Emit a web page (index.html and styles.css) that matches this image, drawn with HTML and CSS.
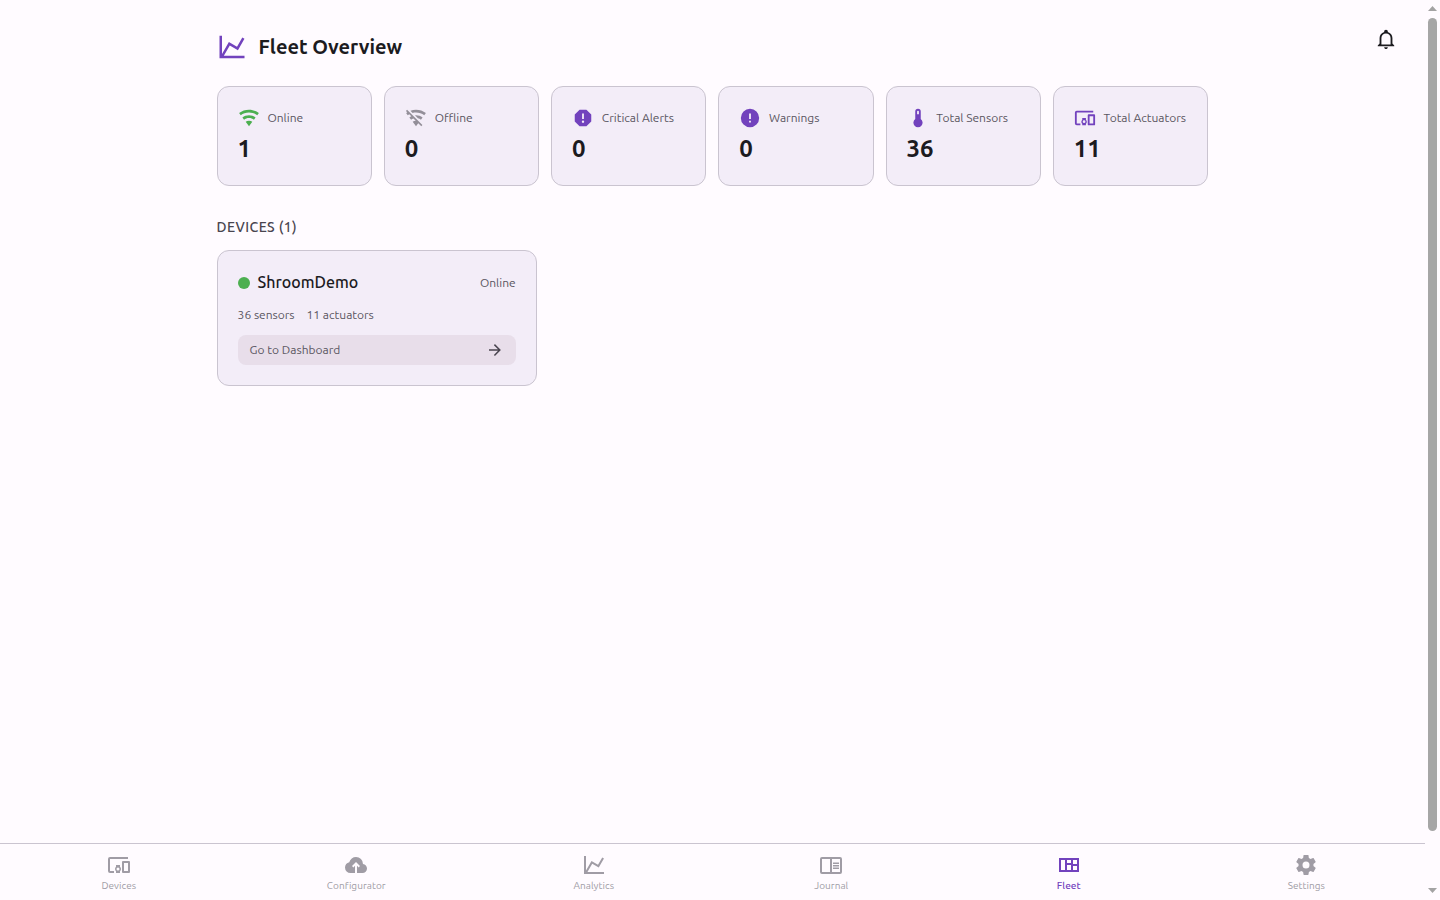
FILE: index.html
```
<!DOCTYPE html>
<html lang="en">
<head>
    <meta charset="UTF-8">
    <meta name="viewport" content="width=device-width, initial-scale=1.0">
    <title>Fleet Overview</title>
    <link rel="stylesheet" href="styles.css">
</head>
<body>
    <svg class="sprite" aria-hidden="true">
        <symbol id="chart" viewBox="0 0 24 24"><path d="M16,11.78L20.24,4.45L21.97,5.45L16.74,14.5L10.23,10.75L5.46,19H22V21H2V3H4V17.54L9.5,8L16,11.78Z"/></symbol>
        <symbol id="wifi" viewBox="0 0 24 24"><path d="M12,21L15.6,16.2C14.6,15.45 13.35,15 12,15C10.65,15 9.4,15.45 8.4,16.2L12,21M12,3C7.95,3 4.21,4.34 1.2,6.6L3,9C5.5,7.12 8.62,6 12,6C15.38,6 18.5,7.12 21,9L22.8,6.6C19.79,4.34 16.05,3 12,3M12,9C9.3,9 6.81,9.89 4.8,11.4L6.6,13.8C8.1,12.67 9.97,12 12,12C14.03,12 15.9,12.67 17.4,13.8L19.2,11.4C17.19,9.89 14.7,9 12,9Z"/></symbol>
        <symbol id="wifi-off" viewBox="0 0 24 24"><path d="M2.28,3L1,4.27L2.47,5.74C2.04,6 1.61,6.29 1.2,6.6L3,9C3.53,8.6 4.08,8.25 4.66,7.93L6.89,10.16C6.15,10.5 5.44,10.91 4.8,11.4L6.6,13.8C7.38,13.22 8.26,12.77 9.2,12.47L11.75,15C10.5,15.07 9.34,15.5 8.4,16.2L12,21L14.46,17.73L17.74,21L19,19.72M12,3C9.85,3 7.8,3.38 5.9,4.07L8.29,6.47C9.5,6.16 10.72,6 12,6C15.38,6 18.5,7.11 21,9L22.8,6.6C19.79,4.34 16.06,3 12,3M12,9C11.62,9 11.25,9 10.88,9.05L14.07,12.25C15.29,12.53 16.43,13.07 17.4,13.8L19.2,11.4C17.2,9.89 14.7,9 12,9Z"/></symbol>
        <symbol id="alert-octagon" viewBox="0 0 24 24"><path d="M13,13H11V7H13M12,17.3A1.3,1.3 0 0,1 10.7,16A1.3,1.3 0 0,1 12,14.7A1.3,1.3 0 0,1 13.3,16A1.3,1.3 0 0,1 12,17.3M15.73,3H8.27L3,8.27V15.73L8.27,21H15.73L21,15.73V8.27L15.73,3Z"/></symbol>
        <symbol id="alert-circle" viewBox="0 0 24 24"><path d="M13,13H11V7H13M13,17H11V15H13M12,2A10,10 0 0,0 2,12A10,10 0 0,0 12,22A10,10 0 0,0 22,12A10,10 0 0,0 12,2Z"/></symbol>
        <symbol id="thermometer" viewBox="0 0 24 24"><path d="M15 13V5A3 3 0 0 0 9 5V13A5 5 0 1 0 15 13M12 4A1 1 0 0 1 13 5V8H11V5A1 1 0 0 1 12 4Z"/></symbol>
        <symbol id="devices" viewBox="0 0 24 24"><path d="M3,6H21V4H3A2,2 0 0,0 1,6V18A2,2 0 0,0 3,20H7V18H3V6M13,12H9V13.78C8.39,14.33 8,15.11 8,16C8,16.89 8.39,17.67 9,18.22V20H13V18.22C13.61,17.67 14,16.88 14,16C14,15.12 13.61,14.33 13,13.78V12M11,17.5A1.5,1.5 0 0,1 9.5,16A1.5,1.5 0 0,1 11,14.5A1.5,1.5 0 0,1 12.5,16A1.5,1.5 0 0,1 11,17.5M22,8H16A1,1 0 0,0 15,9V19A1,1 0 0,0 16,20H22A1,1 0 0,0 23,19V9A1,1 0 0,0 22,8M21,18H17V10H21V18Z"/></symbol>
        <symbol id="arrow" viewBox="0 0 24 24"><path d="M4,11V13H16L10.5,18.5L11.92,19.92L19.84,12L11.92,4.08L10.5,5.5L16,11H4Z"/></symbol>
        <symbol id="bell" viewBox="0 0 24 24"><path d="M10 21H14C14 22.1 13.1 23 12 23S10 22.1 10 21M21 19V20H3V19L5 17V11C5 7.9 7 5.2 10 4.3V4C10 2.9 10.9 2 12 2S14 2.9 14 4V4.3C17 5.2 19 7.9 19 11V17L21 19M17 11C17 8.2 14.8 6 12 6S7 8.2 7 11V18H17V11Z"/></symbol>
        <symbol id="cloud" viewBox="0 0 24 24"><path d="M11 20H6.5Q4.22 20 2.61 18.43 1 16.85 1 14.58 1 12.63 2.17 11.1 3.35 9.57 5.25 9.15 5.88 6.85 7.75 5.43 9.63 4 12 4 14.93 4 16.96 6.04 19 8.07 19 11 20.73 11.2 21.86 12.5 23 13.78 23 15.5 23 17.38 21.69 18.69 20.38 20 18.5 20H13V12.85L14.6 14.4L16 13L12 9L8 13L9.4 14.4L11 12.85Z"/></symbol>
        <symbol id="journal" viewBox="0 0 24 24"><path fill-rule="evenodd" d="M3,4H21A2,2 0 0,1 23,6V19A2,2 0 0,1 21,21H3A2,2 0 0,1 1,19V6A2,2 0 0,1 3,4M3,6V19H11V6H3M13,6V19H21V6H13M14,9.5H20V11H14V9.5M14,12H20V13.5H14V12M14,14.5H20V16H14V14.5Z"/></symbol>
        <symbol id="fleet" viewBox="0 0 24 24"><path fill-rule="evenodd" d="M2,5H22V19H2V5M4,7V17H8V7H4M10,7V10H14V7H10M16,7V11H20V7H16M10,12V17H14V12H10M16,13V17H20V13H16Z"/></symbol>
        <symbol id="cog" viewBox="0 0 24 24"><path d="M12,15.5A3.5,3.5 0 0,1 8.5,12A3.5,3.5 0 0,1 12,8.5A3.5,3.5 0 0,1 15.5,12A3.5,3.5 0 0,1 12,15.5M19.43,12.97C19.47,12.65 19.5,12.33 19.5,12C19.5,11.67 19.47,11.34 19.43,11L21.54,9.37C21.73,9.22 21.78,8.95 21.66,8.73L19.66,5.27C19.54,5.05 19.27,4.96 19.05,5.05L16.56,6.05C16.04,5.66 15.5,5.32 14.87,5.07L14.5,2.42C14.46,2.18 14.25,2 14,2H10C9.75,2 9.54,2.18 9.5,2.42L9.13,5.07C8.5,5.32 7.96,5.66 7.44,6.05L4.95,5.05C4.73,4.96 4.46,5.05 4.34,5.27L2.34,8.73C2.21,8.95 2.27,9.22 2.46,9.37L4.57,11C4.53,11.34 4.5,11.67 4.5,12C4.5,12.33 4.53,12.65 4.57,12.97L2.46,14.63C2.27,14.78 2.21,15.05 2.34,15.27L4.34,18.73C4.46,18.95 4.73,19.03 4.95,18.95L7.44,17.94C7.96,18.34 8.5,18.68 9.13,18.93L9.5,21.58C9.54,21.82 9.75,22 10,22H14C14.25,22 14.46,21.82 14.5,21.58L14.87,18.93C15.5,18.67 16.04,18.34 16.56,17.94L19.05,18.95C19.27,19.03 19.54,18.95 19.66,18.73L21.66,15.27C21.78,15.05 21.73,14.78 21.54,14.63L19.43,12.97Z"/></symbol>
    </svg>

    <div class="app">
        <button class="bell" aria-label="Notifications"><svg><use href="#bell"/></svg></button>
        <main>
            <header>
                <svg><use href="#chart"/></svg>
                <h1>Fleet Overview</h1>
            </header>

            <section class="stats">
                <div class="card stat online">
                    <div class="label"><svg><use href="#wifi"/></svg><span>Online</span></div>
                    <div class="value">1</div>
                </div>
                <div class="card stat offline">
                    <div class="label"><svg><use href="#wifi-off"/></svg><span>Offline</span></div>
                    <div class="value">0</div>
                </div>
                <div class="card stat">
                    <div class="label"><svg><use href="#alert-octagon"/></svg><span>Critical Alerts</span></div>
                    <div class="value">0</div>
                </div>
                <div class="card stat">
                    <div class="label"><svg><use href="#alert-circle"/></svg><span>Warnings</span></div>
                    <div class="value">0</div>
                </div>
                <div class="card stat">
                    <div class="label"><svg><use href="#thermometer"/></svg><span>Total Sensors</span></div>
                    <div class="value">36</div>
                </div>
                <div class="card stat">
                    <div class="label"><svg><use href="#devices"/></svg><span>Total Actuators</span></div>
                    <div class="value">11</div>
                </div>
            </section>

            <h2>Devices (1)</h2>
            <div class="card device">
                <div class="device-head">
                    <span class="dot"></span>
                    <h3>ShroomDemo</h3>
                    <span class="status">Online</span>
                </div>
                <div class="counts"><span>36 sensors</span><span>11 actuators</span></div>
                <a class="go"><span>Go to Dashboard</span><svg><use href="#arrow"/></svg></a>
            </div>
        </main>

        <nav>
            <a><svg><use href="#devices"/></svg><span>Devices</span></a>
            <a><svg><use href="#cloud"/></svg><span>Configurator</span></a>
            <a><svg><use href="#chart"/></svg><span>Analytics</span></a>
            <a><svg><use href="#journal"/></svg><span>Journal</span></a>
            <a class="active"><svg><use href="#fleet"/></svg><span>Fleet</span></a>
            <a><svg><use href="#cog"/></svg><span>Settings</span></a>
        </nav>
    </div>

    <div class="scrollbar">
        <svg class="up" viewBox="0 0 9 5"><path d="M0 5L4.5 0L9 5Z"/></svg>
        <div class="thumb"></div>
        <svg class="down" viewBox="0 0 9 5"><path d="M0 0L4.5 5L9 0Z"/></svg>
    </div>
</body>
</html>
```
FILE: styles.css
```
* {
    box-sizing: border-box;
}
body {
    margin: 0;
    height: 100vh;
    display: flex;
    overflow: hidden;
    font-family: Ubuntu, "Noto Sans", sans-serif;
    background: #fffbff;
    color: #1c1b1f;
}
svg {
    display: block;
    flex: none;
    fill: currentColor;
}
.sprite {
    position: absolute;
    width: 0;
    height: 0;
}
h1, h2, h3 {
    margin: 0;
}
.app {
    position: relative;
    flex: 1;
    display: flex;
    flex-direction: column;
}
.bell {
    position: absolute;
    top: 28px;
    right: 28px;
    padding: 0;
    border: none;
    background: none;
    color: #1c1b1f;
}
.bell svg {
    width: 22px;
    height: 22px;
}
main {
    flex: 1;
    width: 991.4px;
    margin: 0 auto;
    padding: 32px 0.4px 0 0;
    box-sizing: content-box;
}
header {
    display: flex;
    align-items: center;
    gap: 12px;
    height: 30px;
    margin-bottom: 24px;
    color: #7242bd;
}
header svg {
    width: 30px;
    height: 30px;
}
h1 {
    font-size: 20px;
    font-weight: 600;
    line-height: 30px;
    color: #1c1b1f;
}
.card {
    background: #f3edf8;
    border: 1px solid #cac4d0;
    border-radius: 12px;
    padding: 20px;
}
.stats {
    display: grid;
    grid-template-columns: repeat(6, 1fr);
    gap: 12px;
}
.stat {
    height: 100px;
}
.label {
    display: flex;
    align-items: center;
    gap: 7.8px;
    height: 22px;
    color: #7242bd;
    font-size: 12px;
    line-height: 16px;
    white-space: nowrap;
}
.label svg {
    width: 22px;
    height: 22px;
}
.label span {
    padding-bottom: 1px;
    color: #5a5661;
}
.online svg {
    color: #4caf50;
}
.offline svg {
    color: #938f99;
}
.value {
    margin-top: 4px;
    font-size: 24px;
    font-weight: 700;
    line-height: 32px;
}
h2 {
    margin: 31px 0 13px;
    font-size: 14px;
    font-weight: 550;
    line-height: 20px;
    letter-spacing: 0.4px;
    text-transform: uppercase;
    color: #49454f;
}
.device {
    width: 320px;
    height: 136px;
    font-size: 12px;
    color: #5a5661;
}
.device-head {
    display: flex;
    align-items: center;
    height: 24px;
}
.dot {
    width: 12px;
    height: 12px;
    margin-right: 8px;
    border-radius: 50%;
    background: #4caf50;
}
h3 {
    flex: 1;
    padding-bottom: 2px;
    font-size: 16px;
    font-weight: 550;
    color: #1c1b1f;
}
.status {
    padding-bottom: 2px;
}
.counts {
    display: flex;
    gap: 12px;
    margin-top: 12px;
    line-height: 16px;
}
.go {
    display: flex;
    align-items: center;
    justify-content: space-between;
    height: 30px;
    margin-top: 12px;
    padding: 0 12px;
    border-radius: 8px;
    background: #e8deea;
}
.go span {
    padding-bottom: 2px;
}
.go svg {
    width: 18px;
    height: 18px;
    color: #49454f;
}
nav {
    display: flex;
    height: 57px;
    border-top: 1px solid #cac4d0;
}
nav a {
    flex: 1;
    display: flex;
    flex-direction: column;
    align-items: center;
    gap: 2px;
    padding-top: 9px;
    font-size: 10px;
    line-height: 14px;
    letter-spacing: 0.05px;
    color: #a09ca5;
}
nav svg {
    width: 24px;
    height: 24px;
}
nav .active {
    color: #7242bd;
    font-weight: 500;
}
.scrollbar {
    display: flex;
    flex-direction: column;
    width: 15px;
    padding: 6px 3px 7px;
    color: #a3a3a3;
    background: #fffbff;
}
.scrollbar svg {
    width: 9px;
    height: 5px;
}
.thumb {
    width: 9px;
    height: 813px;
    margin: 7px 0 57px;
    border-radius: 5px;
    background: #a6a6a6;
}
```
